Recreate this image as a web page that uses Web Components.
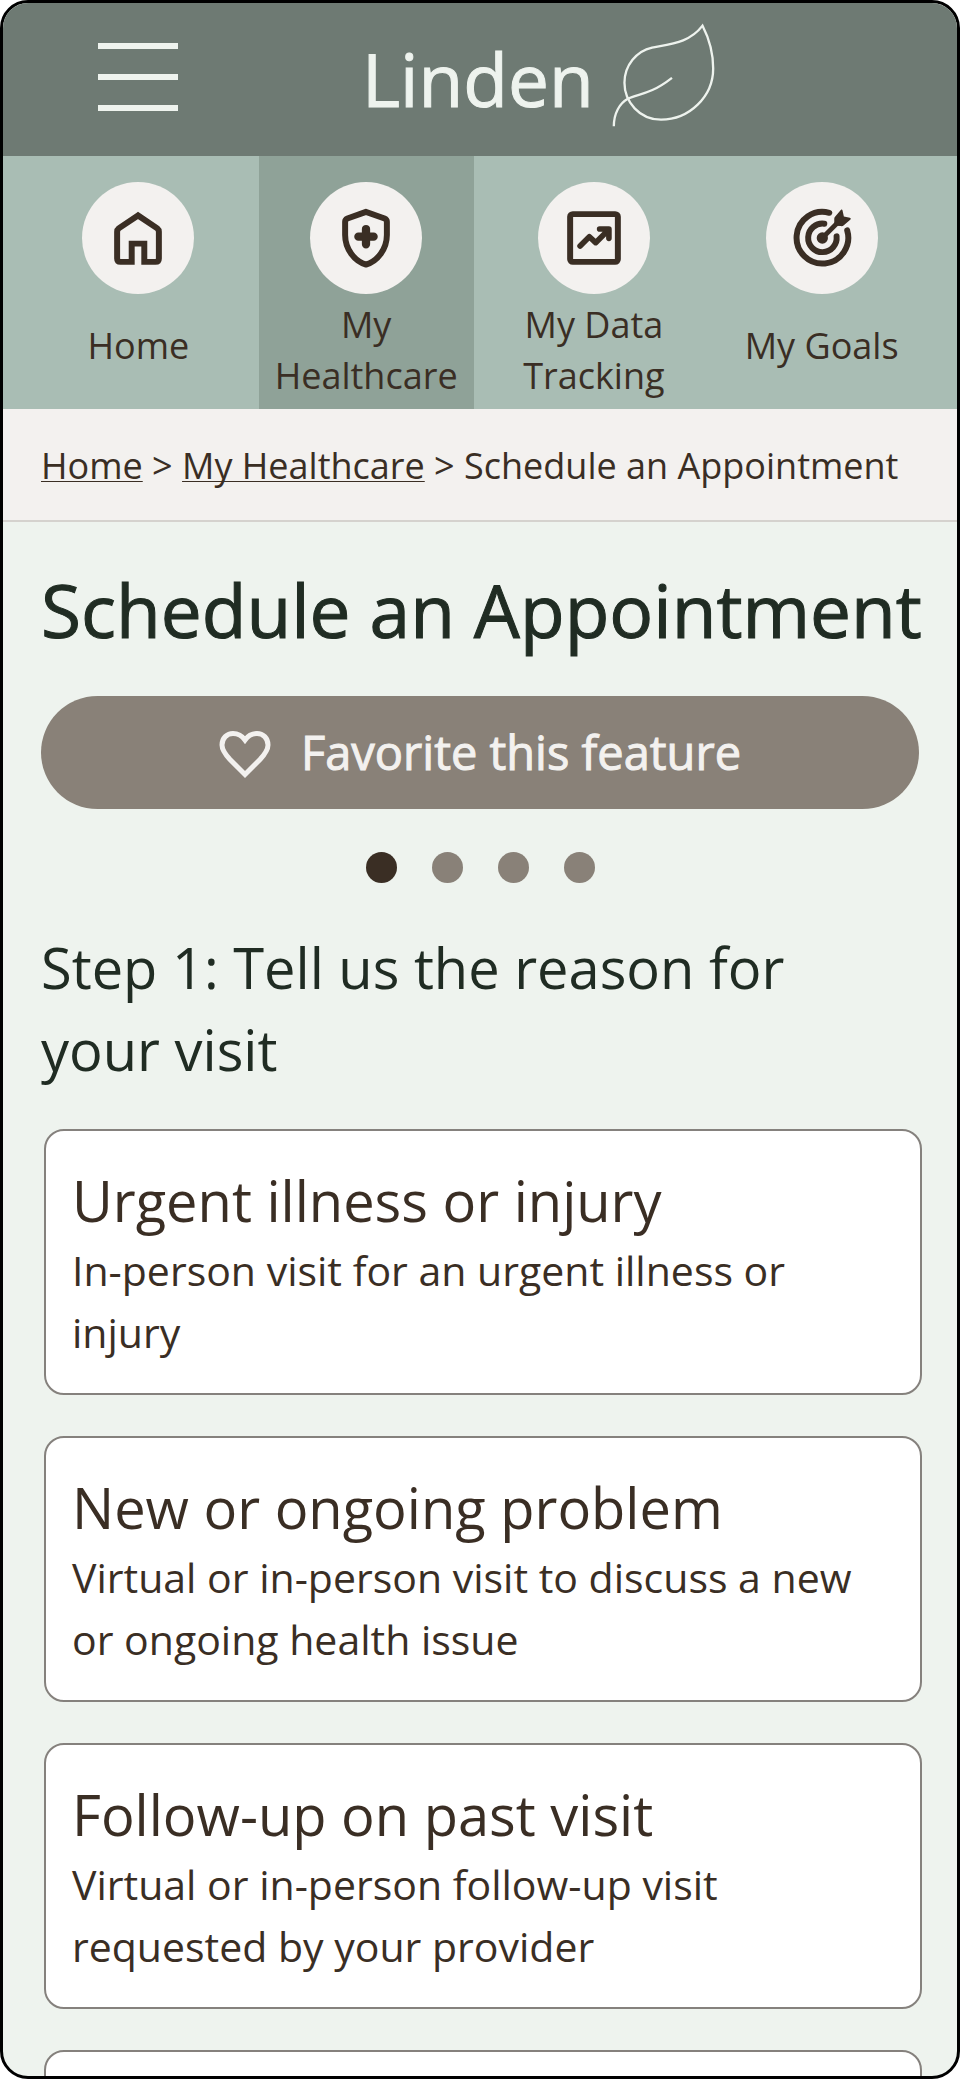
<!DOCTYPE html>
<html lang="en">
<head>
<meta charset="utf-8">
<meta name="viewport" content="width=device-width, initial-scale=1">
<title>Schedule an Appointment - Linden</title>
<style>
  body {
    margin: 0;
    background: #fff;
    font-family: "Open Sans", "Noto Sans", sans-serif;
    --brown: #3a2e24;
    --stone: #898178;
    --forest: #202c23;
    --mist: #eef3ee;
    --linen: #f3f1ef;
    color: var(--brown);
  }
</style>
</head>
<body>
<app-frame>
  <app-header slot="top">Linden</app-header>
  <app-nav slot="top">
    <nav-item icon="home">Home</nav-item>
    <nav-item icon="shield" active>My Healthcare</nav-item>
    <nav-item icon="chart">My Data Tracking</nav-item>
    <nav-item icon="goal">My Goals</nav-item>
  </app-nav>
  <bread-crumb slot="top"></bread-crumb>
  <page-heading>Schedule an Appointment</page-heading>
  <favorite-button>Favorite this feature</favorite-button>
  <step-dots></step-dots>
  <step-heading>Step 1: Tell us the reason for your visit</step-heading>
  <reason-list>
    <reason-card>
      <span slot="title">Urgent illness or injury</span>
      In-person visit for an urgent illness or injury
    </reason-card>
    <reason-card>
      <span slot="title">New or ongoing problem</span>
      Virtual or in-person visit to discuss a new or ongoing health issue
    </reason-card>
    <reason-card>
      <span slot="title">Follow-up on past visit</span>
      Virtual or in-person follow-up visit requested by your provider
    </reason-card>
    <reason-card></reason-card>
  </reason-list>
</app-frame>

<script>
  const define = (name, markup, setup) => {
    customElements.define(name, class extends HTMLElement {
      constructor() {
        super();
        this.attachShadow({ mode: "open" }).innerHTML = markup;
      }
      connectedCallback() {
        if (setup) setup(this, this.shadowRoot);
      }
    });
  };

  // Rounded shell: the bars stay on top, the page content scrolls below them.
  define("app-frame", `
    <style>
      :host {
        display: flex; flex-direction: column; box-sizing: border-box;
        height: 100vh; overflow: hidden;
        border: 3px solid #000; border-radius: 28px; background: var(--mist);
      }
      main {
        flex: 1; min-height: 0; overflow-y: auto; scrollbar-width: none;
        box-sizing: border-box; padding: 39px 38px;
      }
    </style>
    <slot name="top"></slot>
    <main><slot></slot></main>`);

  define("app-header", `
    <style>
      :host {
        display: flex; align-items: center; flex: none; gap: 184px;
        height: 153px; box-sizing: border-box; padding: 0 95px;
        background: #6e7a73; color: var(--mist);
      }
      button {
        display: flex; flex-direction: column; gap: 25px;
        width: 80px; padding: 0; border: 0; background: none; color: inherit;
        margin-bottom: 6px;
      }
      button span { display: block; height: 6px; width: 100%; background: currentColor; }
      a {
        display: flex; align-items: center; gap: 18px; margin-bottom: 8px;
        color: inherit; text-decoration: none;
        font-size: 73px; line-height: 98px; font-weight: 500;
      }
      svg { display: block; width: 104px; height: 105px; flex: none; }
      .word { padding-top: 6px; -webkit-text-stroke: 1px currentColor; }
    </style>
    <button type="button" aria-label="Open menu"><span></span><span></span><span></span></button>
    <a href="#"><span class="word"><slot></slot></span>
      <svg viewBox="818 68 312 316" fill="none" stroke="currentColor" stroke-width="7" aria-hidden="true">
        <path d="M1090 76C1110 115 1122 155 1122 205C1122 290 1050 359 965 359C900 359 855 305 855 248C855 195 892 152 938 142C1000 130 1052 126 1090 76Z"/>
        <path d="M823 379C823 340 840 310 865 296C895 280 930 286 998 233"/>
      </svg>
    </a>`);

  define("app-nav", `
    <style>
      :host { display: block; flex: none; background: #a9bdb4; }
      nav { display: flex; gap: 13px; padding: 0 28px; }
    </style>
    <nav aria-label="Main"><slot></slot></nav>`);

  const icons = {
    home: `<path d="M169 101L111 140Q106 144 106 150V231Q106 241 116 241H150V186H188V241H222Q232 241 232 231V150Q232 144 227 140Z"/>`,
    shield: `<path d="M169 90L113 110Q106 113 106 120V160C106 202 134 239 169 249C204 239 232 202 232 160V120Q232 113 225 110Z"/>
      <path stroke-width="25" stroke-linecap="round" d="M169 142V188M146 165H192"/>`,
    chart: `<rect x="97" y="97" width="144" height="144" rx="8"/>
      <path stroke-width="17" stroke-linecap="round" stroke-linejoin="round" d="M127 193L155 165L174 183L213 144M186 142H214V170"/>
      <path fill="currentColor" stroke="none" d="M190 142H215V166Z"/>`,
    goal: `<g stroke-linecap="round"><path d="M191 93A78 78 0 1 0 245 146"/>
      <path d="M176 126A43 43 0 1 0 213 164"/><path stroke-width="14" stroke-linecap="butt" d="M170 169L216 123"/></g>
      <circle cx="170" cy="169" r="17" fill="currentColor" stroke="none"/>
      <path fill="currentColor" stroke="none" d="M227 83Q230 82 231 86L235 104L253 108Q258 110 255 113L234 131Q231 134 226 133L206 132V111Q206 107 209 104Z"/>`
  };

  define("nav-item", `
    <style>
      :host { display: block; flex: 1 1 0; min-width: 0; }
      :host([active]) { background: #8fa298; }
      a {
        display: flex; flex-direction: column; align-items: center; gap: 5px;
        padding: 26px 4px 8px; color: inherit; text-decoration: none;
      }
      svg {
        width: 112px; height: 112px; border-radius: 50%; background: var(--linen);
        fill: none; stroke: currentColor; stroke-width: 18;
      }
      .label {
        display: flex; align-items: center; min-height: 92px;
        font-size: 36px; line-height: 51px; text-align: center;
      }
    </style>
    <a href="#"><svg viewBox="0 0 338 338" aria-hidden="true"></svg><span class="label"><span><slot></slot></span></span></a>`,
    (host, root) => {
      root.querySelector("svg").innerHTML = icons[host.getAttribute("icon")];
      if (host.hasAttribute("active")) root.querySelector("a").setAttribute("aria-current", "true");
    });

  define("bread-crumb", `
    <style>
      :host {
        display: block; flex: none; padding: 32px 38px 29px;
        background: var(--linen); border-bottom: 2px solid #d5d2ce;
        font-size: 36px; line-height: 50px;
      }
      a {
        color: inherit; text-decoration: underline;
        text-decoration-thickness: 1px; text-underline-offset: 2px;
        text-decoration-skip-ink: none;
      }
    </style>
    <nav aria-label="Breadcrumb"><a href="#">Home</a> &gt; <a href="#">My Healthcare</a> &gt; <span aria-current="page">Schedule an Appointment</span></nav>`);

  define("page-heading", `
    <style>
      :host { display: block; margin-bottom: 37px; }
      h1 {
        margin: 0; color: var(--forest); white-space: nowrap;
        font-size: 73px; line-height: 98px; font-weight: 500;
        -webkit-text-stroke: 1px currentColor;
      }
    </style>
    <h1><slot></slot></h1>`);

  define("favorite-button", `
    <style>
      :host { display: block; margin-bottom: 43px; }
      button {
        display: flex; align-items: center; justify-content: center; gap: 30px;
        width: 100%; height: 113px; padding: 0 0 2px; border: 0; border-radius: 57px;
        background: var(--stone); color: var(--linen);
        font: 500 47px/64px "Open Sans", "Noto Sans", sans-serif;
        -webkit-text-stroke: 1px currentColor;
      }
      svg { width: 52px; height: 48px; margin-top: 6px; }
    </style>
    <button type="button">
      <svg viewBox="0 0 52 48" fill="none" stroke="currentColor" stroke-width="5" aria-hidden="true">
        <path d="M26 43.5L11 28.5C5 22 3 18.5 3 14C3 7 8 2.5 14 2.5C20 2.5 23.5 5.5 26 9C28.5 5.5 32 2.5 38 2.5C44 2.5 49 7 49 14C49 18.500 47 22 41 28.500Z"/>
      </svg>
      <span><slot></slot></span>
    </button>`);

  define("step-dots", `
    <style>
      :host { display: block; margin-bottom: 43px; }
      ol { display: flex; justify-content: center; gap: 35px; margin: 0; padding: 0; list-style: none; }
      li { width: 31px; height: 31px; border-radius: 50%; background: var(--stone); }
      li[aria-current] { background: var(--brown); }
    </style>
    <ol aria-label="Progress"><li aria-current="step"></li><li></li><li></li><li></li></ol>`);

  define("step-heading", `
    <style>
      :host { display: block; margin-bottom: 39px; padding-right: 40px; }
      h2 { margin: 0; color: var(--forest); font-size: 56px; line-height: 82px; font-weight: 400; }
    </style>
    <h2><slot></slot></h2>`);

  define("reason-list", `
    <style>
      :host { display: flex; flex-direction: column; gap: 41px; margin: 0 -3px 0 3px; }
    </style>
    <slot></slot>`);

  define("reason-card", `
    <style>
      :host { display: block; }
      a {
        display: block; box-sizing: border-box; min-height: 266px; padding: 30px 26px;
        border: 2px solid #85817d; border-radius: 20px; background: #fff;
        color: inherit; text-decoration: none;
      }
      h3 { margin: 0; font-size: 56px; line-height: 78px; font-weight: 400; }
      p { margin: 0; font-size: 41px; line-height: 62px; }
    </style>
    <a href="#"><h3><slot name="title"></slot></h3><p><slot></slot></p></a>`);
</script>
</body>
</html>
